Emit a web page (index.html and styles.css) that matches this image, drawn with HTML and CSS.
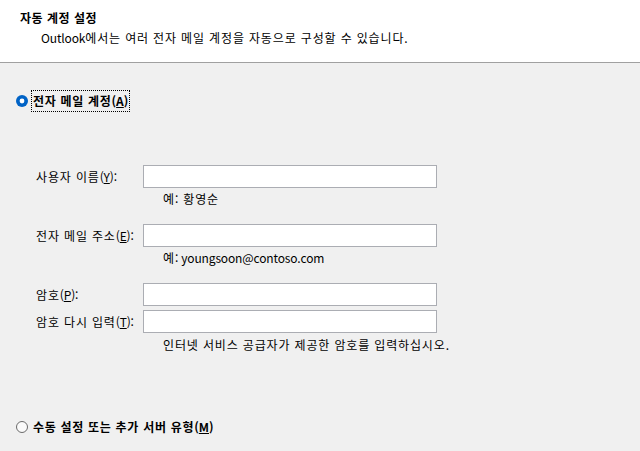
FILE: index.html
```html
<!DOCTYPE html>
<html lang="ko">
<head>
    <meta charset="UTF-8">
    <title>자동 계정 설정</title>
    <link rel="stylesheet" href="styles.css">
</head>
<body>

    <div class="header">
        <div class="title">자동 계정 설정</div>
        <div class="subtitle"><span class="en">Outlook</span>에서는 여러 전자 메일 계정을 자동으로 구성할 수 있습니다.</div>
    </div>

    <div class="content">
        <div class="radio-row first">
            <svg class="radio" width="12" height="12" viewBox="0 0 12 12">
                <circle cx="6" cy="6" r="6" fill="#0063c6"/>
                <circle cx="6" cy="6" r="2.4" fill="#fff"/>
            </svg>
            <span class="radio-label focused">전자 메일 계정<span class="en">(<u>A</u>)</span></span>
        </div>

        <div class="form">
            <div class="field">
                <label class="field-label">사용자 이름<span class="en">(<u>Y</u>):</span></label>
                <div class="textbox"></div>
            </div>
            <div class="hint">예: 황영순</div>

            <div class="field gap">
                <label class="field-label">전자 메일 주소<span class="en">(<u>E</u>):</span></label>
                <div class="textbox"></div>
            </div>
            <div class="hint">예<span class="en">: youngsoon@contoso.com</span></div>

            <div class="field gap">
                <label class="field-label">암호<span class="en">(<u>P</u>):</span></label>
                <div class="textbox"></div>
            </div>
            <div class="field small-gap">
                <label class="field-label">암호 다시 입력<span class="en">(<u>T</u>):</span></label>
                <div class="textbox"></div>
            </div>
            <div class="hint last">인터넷 서비스 공급자가 제공한 암호를 입력하십시오.</div>
        </div>

        <div class="radio-row manual">
            <svg class="radio" width="12" height="12" viewBox="0 0 12 12">
                <circle cx="6" cy="6" r="5.5" fill="#fafafa" stroke="#6a6a6a" stroke-width="1"/>
            </svg>
            <span class="radio-label">수동 설정 또는 추가 서버 유형<span class="en">(<u>M</u>)</span></span>
        </div>
    </div>

</body>
</html>
```

FILE: styles.css
```css
/* 기본 스타일 */
body {
    margin: 0;
    padding: 0;
    font-family: "Noto Sans CJK KR", "Noto Sans", sans-serif;
    font-size: 12px;
    letter-spacing: 0.85px; /* 한글 글자 폭을 맞추기 위해 */
    color: #000;
    background-color: #f0f0f0;
    height: 451px;
    overflow: hidden;
}

.en {
    letter-spacing: -0.15px;
}

u {
    text-decoration: underline;
    text-underline-offset: 1px;
}

/* 상단 헤더 */
.header {
    background-color: #fff;
    height: 53px;
    padding-top: 9px;
    border-bottom: 1px solid #a0a0a0;
}

.title {
    font-weight: bold;
    line-height: 18px;
    padding-left: 20px;
    letter-spacing: 0.5px;
}

.subtitle {
    line-height: 18px;
    padding-left: 41px;
    margin-top: 2px;
}

/* 라디오 버튼 */
.radio-row {
    display: flex;
    align-items: center;
    padding-left: 16px;
    height: 22px;
}

.radio-row.first {
    margin-top: 27px;
}

.radio-row.manual {
    margin-top: 62px;
}

.radio {
    flex: none;
    margin-right: 3px;
}

.radio-label {
    font-weight: bold;
    line-height: 20px;
    padding: 0 1px;
    border: 1px solid transparent;
    letter-spacing: 0.7px;
}

.radio-label .en {
    letter-spacing: 0;
}

.radio-label.focused {
    border: 1px dotted #000;
}

/* 입력 폼 */
.form {
    margin-top: 53px;
}

.field {
    display: flex;
    align-items: center;
    padding-left: 36px;
    height: 23px;
}

.field.gap {
    margin-top: 16px;
}

.field.small-gap {
    margin-top: 4px;
}

.field-label {
    width: 107px;
    flex: none;
    line-height: 18px;
}

.textbox {
    width: 292px;
    height: 21px;
    background-color: #fff;
    border: 1px solid #abadb3;
}

.hint {
    line-height: 18px;
    margin-top: 2px;
    padding-left: 163px;
}

.hint.last {
    margin-top: 3px;
}
```
